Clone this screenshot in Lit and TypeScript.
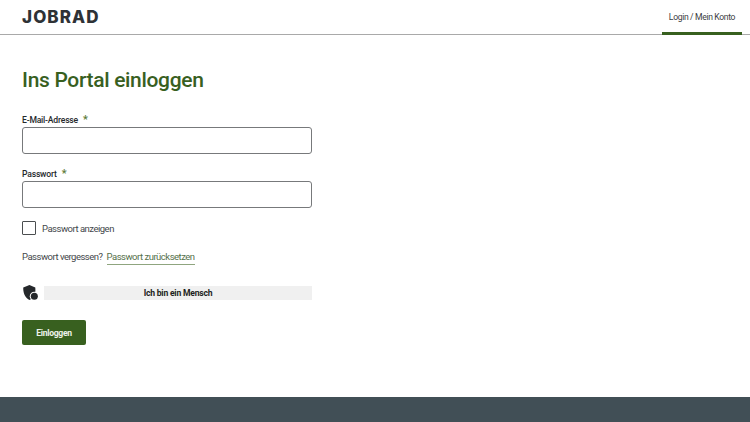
import { LitElement, html, css } from "lit";
import { customElement } from "lit/decorators.js";

@customElement("app-root")
export class AppRoot extends LitElement {
  static styles = css`
    :host {
      display: flex;
      flex-direction: column;
      height: 422px;
      overflow: hidden;
      background: #fff;
      font-family: "Roboto", "Noto Sans", sans-serif;
      color: #2b2f32;
    }
    header {
      height: 34px;
      flex: none;
      border-bottom: 1px solid #a9a9a9;
      display: flex;
      justify-content: space-between;
      padding: 0 8px 0 22px;
    }
    .logo {
      font-family: "Inter", sans-serif;
      font-weight: 800;
      font-size: 17px;
      line-height: 34px;
      letter-spacing: 1.1px;
      color: #2e3236;
    }
    .tab {
      width: 80px;
      height: 35px;
      box-sizing: border-box;
      border-bottom: 3px solid #38601f;
      font-size: 8.6px;
      letter-spacing: -0.35px;
      line-height: 34px;
      text-align: center;
      white-space: nowrap;
      color: #3c4043;
    }
    main {
      flex: 1;
      display: flex;
      flex-direction: column;
      align-items: flex-start;
      padding: 31px 0 0 22px;
    }
    h1 {
      margin: 0;
      font-size: 21px;
      letter-spacing: -0.32px;
      line-height: 28px;
      font-weight: 500;
      color: #38601f;
    }
    .field {
      width: 290px;
      display: flex;
      flex-direction: column;
    }
    .first { margin-top: 20px; }
    .second { margin-top: 13px; }
    label {
      font-size: 8.6px;
      letter-spacing: -0.2px;
      font-weight: 500;
      line-height: 13px;
      display: flex;
      gap: 5px;
      color: #25282b;
      padding-top: 1px;
    }
    label span {
      color: #5a7a35;
      font-size: 11px;
      line-height: 11px;
    }
    .first label { margin-top: -1px; }
    .input {
      height: 27px;
      box-sizing: border-box;
      border: 1px solid #77797b;
      border-radius: 3px;
      background: #fff;
    }
    .check {
      display: flex;
      align-items: center;
      gap: 6px;
      margin-top: 13px;
      font-size: 9.5px;
      letter-spacing: -0.5px;
      color: #44484b;
    }
    .box {
      width: 14px;
      height: 14px;
      box-sizing: border-box;
      border: 1.5px solid #4b4e50;
      border-radius: 1px;
    }
    .forgot {
      display: flex;
      gap: 4px;
      margin-top: 15px;
      font-size: 9.5px;
      letter-spacing: -0.5px;
      line-height: 14px;
      color: #44484b;
    }
    .forgot a {
      color: #54704a;
      border-bottom: 1px solid #8fa57f;
    }
    .captcha {
      width: 290px;
      display: flex;
      align-items: center;
      gap: 5px;
      margin-top: 19px;
    }
    .captcha svg { flex: none; width: 17px; height: 17px; }
    .human {
      flex: 1;
      height: 14px;
      background: #f0f0f0;
      text-align: center;
      font-size: 8.6px;
      letter-spacing: -0.22px;
      line-height: 14px;
      font-weight: 700;
      color: #1d1f21;
    }
    button {
      margin-top: 19px;
      width: 64px;
      height: 25px;
      padding: 0;
      border: none;
      border-radius: 2px;
      background: #38601f;
      color: #eef2ea;
      font: 700 8.6px "Roboto", sans-serif;
      letter-spacing: -0.3px;
    }
    footer {
      height: 25px;
      flex: none;
      background: #414f56;
    }
  `;

  render() {
    return html`
      <header>
        <div class="logo">JOBRAD</div>
        <div class="tab">Login / Mein Konto</div>
      </header>
      <main>
        <h1>Ins Portal einloggen</h1>
        <div class="field first">
          <label>E-Mail-Adresse <span>*</span></label>
          <div class="input"></div>
        </div>
        <div class="field second">
          <label>Passwort <span>*</span></label>
          <div class="input"></div>
        </div>
        <div class="check"><div class="box"></div>Passwort anzeigen</div>
        <div class="forgot">Passwort vergessen? <a>Passwort zurücksetzen</a></div>
        <div class="captcha">
          <svg viewBox="0 0 16 16">
            <path d="M1.2 3.2 L7 1 L12.5 3.2 C13 8 12 12.5 7 15 C2.5 12.5 1 8 1.2 3.2Z" fill="#25282b" />
            <circle cx="11.6" cy="11.6" r="4.3" fill="#fff" />
            <circle cx="11.6" cy="11.6" r="3.3" fill="#25282b" />
          </svg>
          <div class="human">Ich bin ein Mensch</div>
        </div>
        <button>Einloggen</button>
      </main>
      <footer></footer>
    `;
  }
}
